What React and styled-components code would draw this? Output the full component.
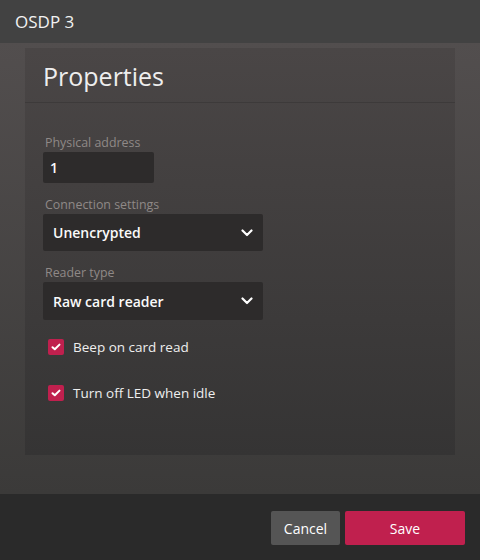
import React from 'react';
import styled, { createGlobalStyle } from 'styled-components';

const GlobalStyle = createGlobalStyle`
  html, body {
    margin: 0;
    padding: 0;
    background: #2a2a2a;
  }
  body {
    font-family: "Open Sans", "Noto Sans", sans-serif;
    color: #fff;
  }
`;

const Dialog = styled.div`
  width: 480px;
  height: 560px;
  display: flex;
  flex-direction: column;
`;

const Header = styled.header`
  height: 43px;
  flex: none;
  background: #424242;
  display: flex;
  align-items: center;
  padding: 0 15px;
  box-sizing: border-box;
  font-size: 17px;
  color: #f2f2f2;
`;

const Body = styled.main`
  flex: 1;
  background: linear-gradient(180deg, #524e4e 0%, #3b3a39 100%);
  padding: 5px 25px 39px;
  display: flex;
`;

const Card = styled.section`
  flex: 1;
  background: linear-gradient(180deg, #4a4646 0%, #353434 100%);
  display: flex;
  flex-direction: column;
`;

const CardTitle = styled.h2`
  margin: 0;
  height: 55px;
  box-sizing: border-box;
  padding: 11px 18px 0;
  font-size: 25px;
  font-weight: 400;
  color: #eeeeee;
  border-bottom: 1px solid #3d3a3a;
`;

const CardBody = styled.div`
  padding: 32px 18px 0;
  display: flex;
  flex-direction: column;
`;

const Field = styled.div`
  display: flex;
  flex-direction: column;
  margin-bottom: 14px;
`;

const Label = styled.label`
  font-size: 12.4px;
  line-height: 16px;
  color: #8f8987;
  margin: 0 0 1px 2px;
`;

const Input = styled.div`
  width: ${p => p.$width}px;
  height: ${p => p.$height}px;
  box-sizing: border-box;
  background: #2d2b2b;
  border-radius: 2px;
  display: flex;
  align-items: center;
  justify-content: space-between;
  padding: 0 10px 0 ${p => p.$pad}px;
  font-size: 14px;
  font-weight: 600;
  color: #fafafa;
`;

const Chevron = () => (
  <svg width="12" height="8" viewBox="0 0 12 8">
    <polyline points="1.5,1.5 6,6 10.5,1.5" fill="none" stroke="#fff" strokeWidth="2.2" strokeLinecap="round" strokeLinejoin="round" />
  </svg>
);

const CheckRow = styled.div`
  display: flex;
  align-items: center;
  gap: 9px;
  padding-left: 5px;
  margin-top: ${p => p.$top}px;
  font-size: 13.5px;
  color: #eeeeee;
`;

const Box = styled.span`
  width: 16px;
  height: 16px;
  border-radius: 2px;
  background: #c0204e;
  display: flex;
  align-items: center;
  justify-content: center;
`;

const Check = () => (
  <svg width="10" height="8" viewBox="0 0 10 8">
    <polyline points="1.5,4.2 3.8,6.3 8.5,1.6" fill="none" stroke="#fff" strokeWidth="2" strokeLinecap="round" strokeLinejoin="round" />
  </svg>
);

const Footer = styled.footer`
  height: 66px;
  flex: none;
  background: #2a2a2a;
  display: flex;
  justify-content: flex-end;
  align-items: flex-start;
  gap: 5px;
  padding: 17px 15px 0;
  box-sizing: border-box;
`;

const Button = styled.button`
  height: 34px;
  width: ${p => p.$width}px;
  border: none;
  border-radius: 2px;
  background: ${p => (p.$primary ? '#c0204e' : '#555555')};
  color: #fff;
  font-family: inherit;
  font-size: 14px;
  font-weight: 500;
  cursor: pointer;
`;

export default function App() {
  return (
    <>
      <GlobalStyle />
      <Dialog>
        <Header>OSDP 3</Header>
        <Body>
          <Card>
            <CardTitle>Properties</CardTitle>
            <CardBody>
              <Field>
                <Label>Physical address</Label>
                <Input $width={111} $height={31} $pad={7}>1</Input>
              </Field>
              <Field>
                <Label>Connection settings</Label>
                <Input $width={220} $height={37} $pad={10}>
                  Unencrypted
                  <Chevron />
                </Input>
              </Field>
              <Field>
                <Label>Reader type</Label>
                <Input $width={220} $height={38} $pad={10}>
                  Raw card reader
                  <Chevron />
                </Input>
              </Field>
              <CheckRow $top={4}>
                <Box><Check /></Box>
                Beep on card read
              </CheckRow>
              <CheckRow $top={28}>
                <Box><Check /></Box>
                Turn off LED when idle
              </CheckRow>
            </CardBody>
          </Card>
        </Body>
        <Footer>
          <Button $width={69}>Cancel</Button>
          <Button $width={120} $primary>Save</Button>
        </Footer>
      </Dialog>
    </>
  );
}
